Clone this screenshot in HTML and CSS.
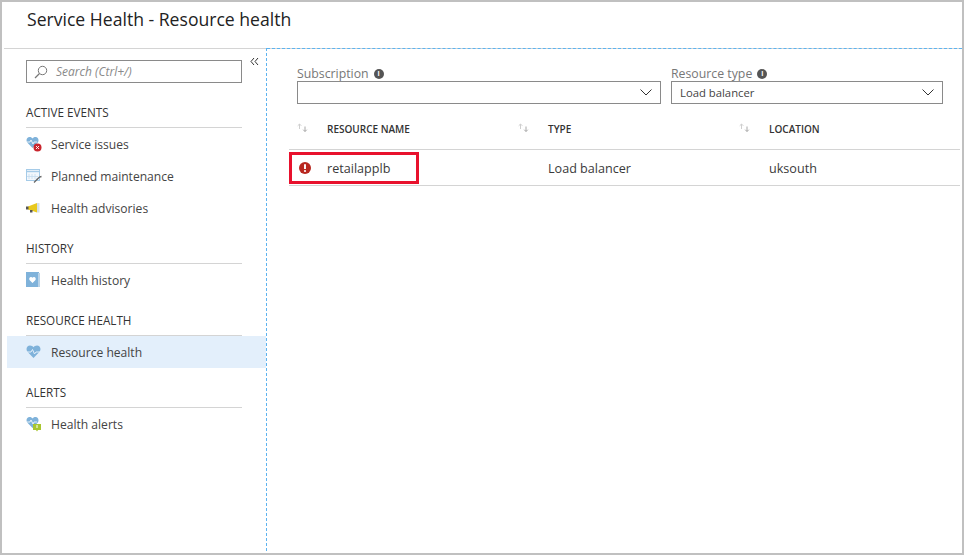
FILE: index.html
```html
<!DOCTYPE html>
<html lang="en">

<head>
    <meta charset="UTF-8">
    <title>Service Health - Resource health</title>
    <link rel="stylesheet" href="styles.css">
</head>

<body>
    <svg class="defs" width="0" height="0">
        <symbol id="sort" viewBox="0 0 11 10">
            <path d="M2.500 6V1M.7 2.800L2.500 1L4.300 2.800" fill="none" stroke="#cfcfcf" stroke-width="1" />
            <path d="M8 3.500V8.500M6.200 6.700L8 8.500L9.800 6.700" fill="none" stroke="#a8a8a8" stroke-width="1" />
        </symbol>
    </svg>
    <div class="frame">
        <h1 class="title">Service Health - Resource health</h1>
        <div class="content">
            <div class="sidebar">
                <div class="search-row">
                    <div class="search">
                        <svg class="search-icon" width="14" height="14" viewBox="0 0 14 14">
                            <circle cx="8.5" cy="5.5" r="4.2" fill="none" stroke="#777" stroke-width="1" />
                            <path d="M5.5 8.5L1 13" stroke="#777" stroke-width="1.2" />
                        </svg>
                        <span>Search (Ctrl+/)</span>
                    </div>
                    <svg class="collapse" width="9" height="9" viewBox="0 0 9 9">
                        <path d="M4 1L1 4.5L4 8M8 1L5 4.5L8 8" fill="none" stroke="#333" stroke-width="1" />
                    </svg>
                </div>

                <h2 class="group first">ACTIVE EVENTS</h2>
                <ul class="menu">
                    <li>
                        <svg width="16" height="16" viewBox="0 0 16 16">
                            <path d="M6.5 12L1.2 6.5C-.4 4 1 1 3.6 1C5 1 6 1.7 6.5 2.6C7 1.7 8 1 9.6 1C12.2 1 13.4 4 11.8 6.5Z" fill="#7fb2da" />
                            <path d="M1 6h3l1-2l2 4l1-2h3" fill="none" stroke="#fff" stroke-width=".8" />
                            <circle cx="11.5" cy="11.5" r="4" fill="#c9252d" />
                            <path d="M10 10l3 3M13 10l-3 3" stroke="#fff" stroke-width=".9" />
                        </svg>
                        Service issues
                    </li>
                    <li>
                        <svg width="16" height="16" viewBox="0 0 16 16">
                            <rect x=".5" y="1.5" width="13" height="11" fill="#f2f7fc" stroke="#a5cbe8" />
                            <path d="M.5 3.500h13" stroke="#a5cbe8" stroke-width="1.4" />
                            <path d="M3 6v5M6 6v5M9 6v5M1 8.5h11" stroke="#c4dcef" stroke-width=".8" />
                            <path d="M8 14.500l3.500-3.500" stroke="#666" stroke-width="1.300" />
                            <path d="M11 11.500l2.500-2.500L15.500 8.500" fill="none" stroke="#666" stroke-width="1.300" />
                        </svg>
                        Planned maintenance
                    </li>
                    <li>
                        <svg width="16" height="16" viewBox="0 0 16 16">
                            <path d="M2 6.500L11 3V12.500L2 9.500Z" fill="#e8c81e" />
                            <path d="M0 6.500h2.500v3H0zM4 10h2.500v2.500H4z" fill="#555" />
                            <path d="M11 3h2.500v9.500H11z" fill="#d5e0e8" />
                        </svg>
                        Health advisories
                    </li>
                </ul>

                <h2 class="group">HISTORY</h2>
                <ul class="menu">
                    <li>
                        <svg width="16" height="16" viewBox="0 0 16 16">
                            <rect x="0" y="0" width="13" height="15" fill="#7fb2da" />
                            <path d="M12 1h2v14h-2z" fill="#b9d3e8" />
                            <path d="M6.500 11L3.500 8C2.800 6.800 3.500 5 5 5C5.700 5 6.200 5.300 6.500 5.800C6.800 5.300 7.300 5 8 5C9.500 5 10.200 6.800 9.500 8Z" fill="#fff" />
                        </svg>
                        Health history
                    </li>
                </ul>

                <h2 class="group">RESOURCE HEALTH</h2>
                <ul class="menu">
                    <li class="selected">
                        <svg width="16" height="16" viewBox="0 0 16 16">
                            <path d="M7.500 14L1.200 7.500C-.5 4.500 1.200 1.500 4 1.500C5.500 1.500 6.800 2.200 7.500 3.300C8.200 2.200 9.500 1.500 11 1.500C13.800 1.500 15.500 4.500 13.800 7.500Z" fill="#7fb2da" />
                            <path d="M0 8h5l1.500-2.500l2 4.500l1.500-2h5" fill="none" stroke="#e3effb" stroke-width="1" />
                        </svg>
                        Resource health
                    </li>
                </ul>

                <h2 class="group">ALERTS</h2>
                <ul class="menu">
                    <li>
                        <svg width="16" height="16" viewBox="0 0 16 16">
                            <path d="M6.500 12L1.200 6.500C-.4 4 1 1 3.600 1C5 1 6 1.700 6.500 2.600C7 1.700 8 1 9.600 1C12.200 1 13.400 4 11.800 6.500Z" fill="#7fb2da" />
                            <path d="M1 6h3l1-2l2 4l1-2h3" fill="none" stroke="#fff" stroke-width=".8" />
                            <path d="M7 8h8v6h-3l-1 1.500l-1-1.500H7z" fill="#a9c62f" />
                            <path d="M11 9v3" stroke="#fff" stroke-width="1" />
                        </svg>
                        Health alerts
                    </li>
                </ul>
            </div>

            <div class="main">
                <div class="filters">
                    <div class="filter filter-sub">
                        <label>Subscription <span class="info">i</span></label>
                        <div class="select">
                            <span></span>
                            <svg width="12" height="7" viewBox="0 0 12 7">
                                <path d="M.5 .5L6 6L11.500 .5" fill="none" stroke="#333" stroke-width="1" />
                            </svg>
                        </div>
                    </div>
                    <div class="filter filter-type">
                        <label>Resource type <span class="info">i</span></label>
                        <div class="select">
                            <span>Load balancer</span>
                            <svg width="12" height="7" viewBox="0 0 12 7">
                                <path d="M.5 .5L6 6L11.500 .5" fill="none" stroke="#333" stroke-width="1" />
                            </svg>
                        </div>
                    </div>
                </div>

                <div class="table">
                    <div class="row head">
                        <div class="cell"><svg class="sort" width="11" height="10"><use href="#sort" /></svg>RESOURCE NAME</div>
                        <div class="cell"><svg class="sort" width="11" height="10"><use href="#sort" /></svg>TYPE</div>
                        <div class="cell"><svg class="sort" width="11" height="10"><use href="#sort" /></svg>LOCATION</div>
                    </div>
                    <div class="row body">
                        <div class="cell">
                            <svg class="status" width="12" height="12" viewBox="0 0 12 12">
                                <circle cx="6" cy="6" r="6" fill="#b8271f" />
                                <path d="M6 2.300v4.700" stroke="#fff" stroke-width="1.900" />
                                <circle cx="6" cy="9" r="1.100" fill="#fff" />
                            </svg>
                            retailapplb
                        </div>
                        <div class="cell">Load balancer</div>
                        <div class="cell">uksouth</div>
                        <div class="highlight"></div>
                    </div>
                </div>
            </div>
        </div>
    </div>
</body>

</html>
```

FILE: styles.css
```css
* {
    margin: 0;
    padding: 0;
    box-sizing: border-box;
}

li {
    list-style: none;
}

body {
    width: 964px;
    height: 555px;
    overflow: hidden;
    background: #fff;
    color: #3a3a3a;
    font-family: "Open Sans", "Noto Sans", sans-serif;
    font-size: 12px;
}

.defs {
    display: block;
}

.frame {
    height: 555px;
    border: 2px solid #c0c0c0;
    display: flex;
    flex-direction: column;
}

.title {
    height: 46px;
    padding: 7px 0 0 25px;
    font-size: 17.6px;
    line-height: 20px;
    font-weight: 400;
    color: #222;
}

.content {
    flex: 1;
    display: flex;
    margin-left: 2px;
    border-top: 1px solid #d4d4d4;
}

.sidebar {
    width: 263px;
    padding: 12px 0 0 3px;
    border-right: 1px dashed #5cb3f0;
    margin-top: -1px;
    margin-bottom: 2px;
}

.search-row {
    display: flex;
    align-items: flex-start;
    margin-left: 19px;
}

.search {
    width: 216px;
    height: 23px;
    border: 1px solid #8a8a8a;
    display: flex;
    align-items: center;
    padding-left: 7px;
    gap: 8px;
    color: #8a8a8a;
    font-style: italic;
    font-size: 12px;
}

.collapse {
    margin: -3px 0 0 8px;
}

.group {
    font-size: 11.7px;
    font-weight: 400;
    color: #333;
    margin: 0 24px 0 19px;
    padding-top: 17px;
    height: 40px;
    line-height: 14px;
    border-bottom: 1px solid #d4d4d4;
}

.group.first {
    margin-top: 5px;
}

.menu li {
    height: 32px;
    display: flex;
    align-items: center;
    gap: 9px;
    padding-left: 19px;
    color: #444;
    font-size: 12.100px;
}

.menu li svg {
    flex: none;
}

.menu li.selected {
    background: #e3effb;
}

.main {
    flex: 1;
    border-top: 1px dashed #5cb3f0;
    margin-top: -1px;
    padding: 17px 0 0 22px;
}

.filters {
    display: flex;
    gap: 10px;
    margin-left: 8px;
}

.filter label {
    display: flex;
    align-items: center;
    gap: 5px;
    height: 15px;
    color: #777;
    font-size: 12.300px;
}

.filter-sub {
    width: 364px;
}

.filter-type {
    width: 272px;
}

.info {
    width: 10px;
    height: 10px;
    border-radius: 50%;
    background: #555;
    color: #fff;
    font-size: 7px;
    line-height: 10px;
    text-align: center;
    font-weight: 700;
}

.select {
    height: 23px;
    border: 1px solid #8a8a8a;
    display: flex;
    align-items: center;
    justify-content: space-between;
    padding: 0 8px;
    font-size: 11.300px;
    color: #444;
}

.table {
    margin-top: 15px;
    width: 671px;
}

.row {
    display: grid;
    grid-template-columns: 221px 221px 229px;
    position: relative;
}

.row.head {
    height: 31px;
    font-size: 10px;
    font-weight: 600;
    color: #333;
    border-bottom: 1px solid #d4d4d4;
}

.row.head .cell {
    padding-bottom: 10px;
}

.row.body {
    height: 36px;
    font-weight: 500;
    font-size: 12.600px;
    color: #3a3a3a;
    border-bottom: 1px solid #d4d4d4;
}

.row.body .cell {
    padding-top: 1px;
}

.cell {
    display: flex;
    align-items: center;
    padding-left: 38px;
    position: relative;
}

.sort {
    position: absolute;
    left: 0;
    margin-left: 8px;
    top: 4px;
}

.status {
    position: absolute;
    left: 10px;
    top: 12px;
}

.highlight {
    position: absolute;
    left: 0;
    top: 2px;
    width: 130px;
    height: 32px;
    border: 3px solid #e8112d;
}
```
